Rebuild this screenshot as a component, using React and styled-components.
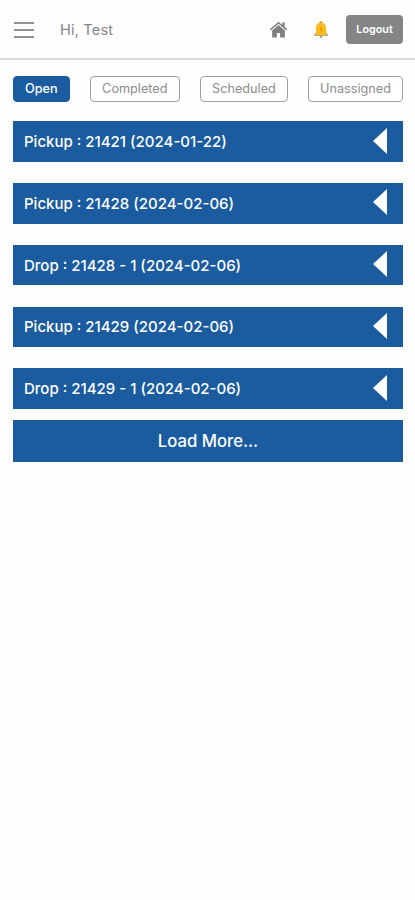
import React from 'react';
import styled, { createGlobalStyle } from "styled-components";

const tabs = [
    { name: 'Open', width: 56.5, active: true },
    { name: 'Completed', width: 90 },
    { name: 'Scheduled', width: 87.5 },
    { name: 'Unassigned', width: 95 },
];

const orders = [
    'Pickup : 21421 (2024-01-22)',
    'Pickup : 21428 (2024-02-06)',
    'Drop : 21428 - 1 (2024-02-06)',
    'Pickup : 21429 (2024-02-06)',
    'Drop : 21429 - 1 (2024-02-06)',
];

const HomeIcon = () => (
    <svg width="19" height="18" viewBox="0 0 20 18" fill="#7f7f7f">
        <path d="M10 3.8 3.3 9.5V17h5v-4.8h3.4V17h5V9.5z" />
        <path d="M10 .4.8 8.3l1 1.2L10 2.5l8.2 7 1-1.2-2.7-2.4V1.2h-2.6v2.5z" />
    </svg>
)

const BellIcon = () => (
    <svg width="16" height="18" viewBox="0 0 16 18">
        <path d="M6.6 15.3h2.8L8 17.4z" fill="#858078" />
        <path d="M1.2 13.7 3 11.5h10l1.8 2.2v1H1.2z" fill="#a58c58" />
        <circle cx="8" cy="2" r="1.7" fill="#c39a42" />
        <path d="M8 1.7c-3.3 0-5 2.4-5 5.5v4.6L2.2 14h11.6l-.8-2.2V7.2c0-3.1-1.7-5.5-5-5.5z" fill="#fbbb1c" />
        <path d="M7.5 6.2h1.4v4H7.5z" fill="#d99b16" />
    </svg>
)

const App = () => {
    return (
        <>
            <GlobalStyle />
            <Header>
                <MenuButton aria-label="Menu"><span /><span /><span /></MenuButton>
                <Greeting>Hi, Test</Greeting>
                <HeaderActions>
                    <IconButton aria-label="Home"><HomeIcon /></IconButton>
                    <IconButton aria-label="Notifications"><BellIcon /></IconButton>
                    <LogoutButton>Logout</LogoutButton>
                </HeaderActions>
            </Header>
            <Main>
                <Tabs>
                    {tabs.map((tab) => (
                        <Tab key={tab.name} $width={tab.width} $active={tab.active}>{tab.name}</Tab>
                    ))}
                </Tabs>
                <OrderList>
                    {orders.map((order) => (
                        <Order key={order}>
                            <span>{order}</span>
                            <Arrow />
                        </Order>
                    ))}
                </OrderList>
                <LoadMore>Load More...</LoadMore>
            </Main>
        </>
    )
}

// styled-components
const GlobalStyle = createGlobalStyle`
    * {
        box-sizing: border-box;
    }
    body {
        margin: 0;
        background-color: #fefefe;
        font-family: Inter, "Liberation Sans", sans-serif;
    }
    button {
        margin: 0;
        padding: 0;
        border: 0;
        background: none;
        font-family: inherit;
        white-space: nowrap;
        cursor: pointer;
    }
`

const Header = styled.header`
    display: flex;
    align-items: center;
    height: 60px;
    padding: 0 12px 0 14px;
    border-bottom: 2px solid #dcdcdc;
`

const MenuButton = styled.button`
    display: flex;
    flex-direction: column;
    gap: 5px;
    width: 20px;
    margin-top: 1px;
    & span {
        height: 2px;
        background-color: #929292;
    }
`

const Greeting = styled.span`
    margin-left: 26px;
    color: #858585;
    font-size: 14.5px;
    letter-spacing: 0.2px;
`

const HeaderActions = styled.div`
    display: flex;
    align-items: center;
    margin-left: auto;
    padding-top: 1px;
`

const IconButton = styled.button`
    display: flex;
    margin-right: 25px;
    & + & {
        margin-right: 17px;
    }
`

const LogoutButton = styled.button`
    width: 57px;
    height: 29px;
    border-radius: 4px;
    background-color: #858585;
    color: #fff;
    font-size: 10.8px;
    font-weight: 600;
`

const Main = styled.main`
    padding: 16px 12px 0 13px;
`

const Tabs = styled.div`
    display: flex;
    justify-content: space-between;
`

const Tab = styled.button`
    width: ${({ $width }) => $width}px;
    height: 26px;
    padding-bottom: 1px;
    border: 1px solid ${({ $active }) => ($active ? '#1a5c9f' : '#a0a0a0')};
    border-radius: 4px;
    background-color: ${({ $active }) => ($active ? '#1a5c9f' : '#fff')};
    color: ${({ $active }) => ($active ? '#fff' : '#8c8c8c')};
    font-size: 12.7px;
    font-weight: ${({ $active }) => ($active ? 500 : 400)};
`

const OrderList = styled.div`
    display: grid;
    gap: 21.3px;
    margin-top: 19.3px;
`

const Order = styled.div`
    display: flex;
    align-items: center;
    justify-content: space-between;
    height: 40.5px;
    padding: 0 16px 0 11px;
    background-color: #1a5c9f;
    color: #fff;
    font-size: 15px;
    font-weight: 550;
    white-space: nowrap;
`

const Arrow = styled.i`
    margin-bottom: 2px;
    border-style: solid;
    border-width: 13px 14px 13px 0;
    border-color: transparent #fff transparent transparent;
`

const LoadMore = styled.button`
    display: block;
    width: 100%;
    height: 42px;
    margin-top: 11.5px;
    background-color: #1a5c9f;
    color: #fff;
    font-size: 16.7px;
    font-weight: 500;
`


export default App;
